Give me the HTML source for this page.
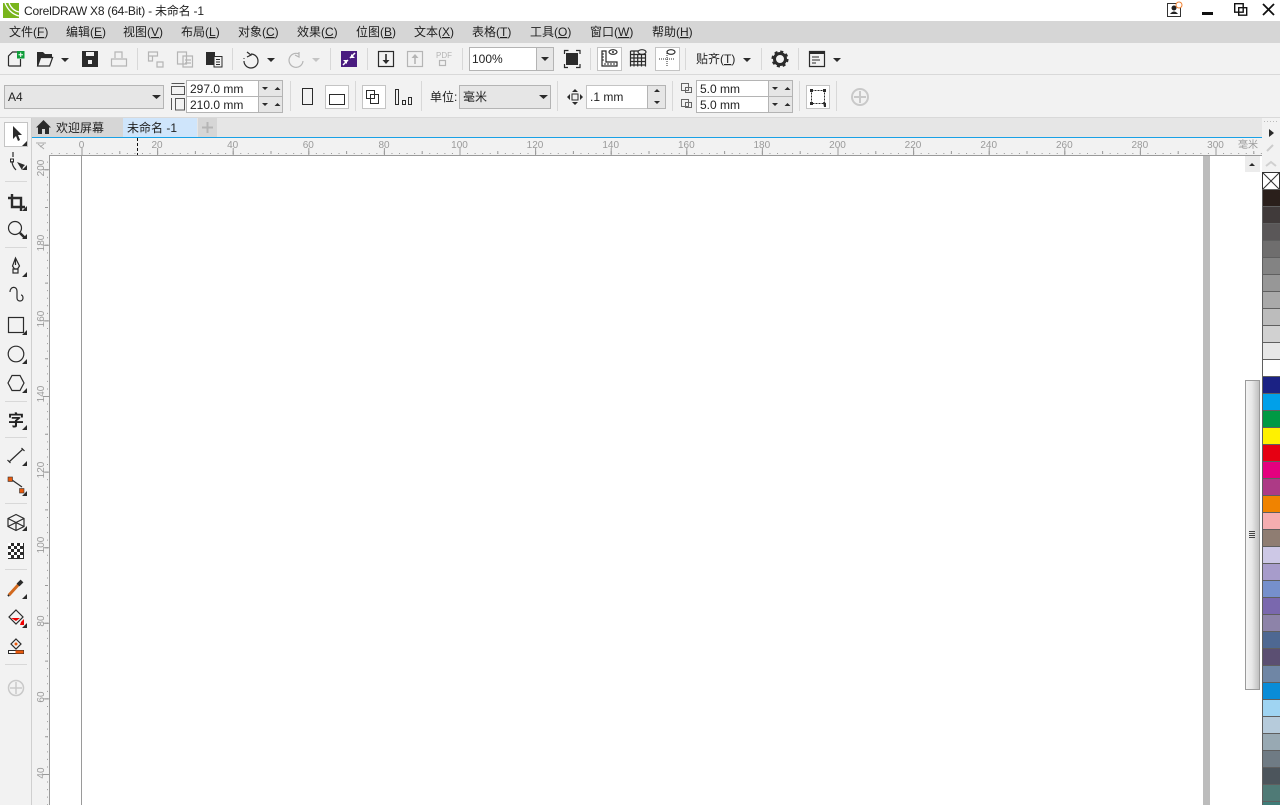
<!DOCTYPE html>
<html lang="zh"><head><meta charset="utf-8"><title>CorelDRAW X8</title>
<style>html,body{margin:0;padding:0;width:1280px;height:805px;overflow:hidden;background:#fff}svg{display:block}
text{font-family:"Liberation Sans","Noto Sans CJK SC",sans-serif;font-size:12px;fill:#222}
.m text{font-size:12px}.r text{font-size:10px;fill:#9a9a9a;text-anchor:middle}
.ic{fill:none;stroke:#2b2b2b;stroke-width:1.2}.g{fill:none;stroke:#b5b5b5;stroke-width:1.2}.d{fill:#2b2b2b}
.sep{stroke:#d8d8d8;stroke-width:1}.box{fill:#fff;stroke:#b4b4b4}.sp{fill:#e6e6e6;stroke:#b4b4b4}.btn{fill:#fff;stroke:#c4c4c4}
</style></head><body>
<svg width="1280" height="805" viewBox="0 0 1280 805" xmlns="http://www.w3.org/2000/svg">
<rect width="1280" height="805" fill="#fff"/>
<!-- title -->
<rect x="3" y="3" width="16" height="15" fill="#79b51c"/><path d="M5 3C8 10 12 14 19 16M9 3C11 8 14 11 19 12" stroke="#fff" stroke-width="1.3" fill="none"/>
<text x="24" y="15" textLength="180" lengthAdjust="spacing">CorelDRAW X8 (64-Bit) - 未命名 -1</text>
<rect x="1167.500" y="3.500" width="13" height="13" fill="none" stroke="#333"/><circle cx="1174" cy="8" r="2.500" fill="#222"/><path d="M1170 14q4-5 8 0z" fill="#222"/><circle cx="1179" cy="5" r="3" fill="#fff" stroke="#f08030"/>
<rect x="1202" y="12" width="11" height="3" fill="#111"/>
<path d="M1234.700 3.700h8.500v8.500h-8.500zM1238.700 7.700h8v7.500h-8z" fill="#fff" stroke="#111" stroke-width="1.400"/>
<path d="M1263 4l11 11M1274 4l-11 11" stroke="#111" stroke-width="1.800"/>
<!-- menu -->
<rect y="21" width="1280" height="22" fill="#d6d6d6"/>
<g class="m">
<text x="9" y="36">文件(<tspan text-decoration="underline">F</tspan>)</text>
<text x="66" y="36">编辑(<tspan text-decoration="underline">E</tspan>)</text>
<text x="123" y="36">视图(<tspan text-decoration="underline">V</tspan>)</text>
<text x="181" y="36">布局(<tspan text-decoration="underline">L</tspan>)</text>
<text x="238" y="36">对象(<tspan text-decoration="underline">C</tspan>)</text>
<text x="297" y="36">效果(<tspan text-decoration="underline">C</tspan>)</text>
<text x="356" y="36">位图(<tspan text-decoration="underline">B</tspan>)</text>
<text x="414" y="36">文本(<tspan text-decoration="underline">X</tspan>)</text>
<text x="472" y="36">表格(<tspan text-decoration="underline">T</tspan>)</text>
<text x="530" y="36">工具(<tspan text-decoration="underline">O</tspan>)</text>
<text x="590" y="36">窗口(<tspan text-decoration="underline">W</tspan>)</text>
<text x="652" y="36">帮助(<tspan text-decoration="underline">H</tspan>)</text>
</g>
<!-- bars -->
<rect y="43" width="1280" height="75" fill="#f2f2f2"/>
<path d="M0 74.500H1280M0 117.500H1280" stroke="#d9d9d9"/>
<path class="sep" d="M137.500 48v22M232.500 48v22M330.500 48v22M367.500 48v22M462.500 48v22M590.500 48v22M685.500 48v22M761.500 48v22M798.500 48v22M290.500 81v30M355.500 81v30M421.500 81v30M557.500 81v30M672.500 81v30M799.500 81v30M836.500 81v30"/>
<!-- toolbar icons -->
<path class="ic" d="M8.500 66v-10l4-4h5M8.500 66h12v-7"/><rect x="17" y="51" width="7.500" height="7.500" fill="#0f9d3a"/><path d="M20.700 52.500v4.500M18.500 54.700h4.500" stroke="#fff"/>
<path d="M37 66V52h6l2 2h7v3h-10l-3 9z" class="d"/><path d="M37.600 66l3-8.500h12l-3 8.500z" fill="#f2f2f2" stroke="#2b2b2b" stroke-width="1.200"/>
<path class="d" d="M61 58h8l-4 4z"/>
<path class="d" d="M82 51h16v16H82z"/><rect x="86" y="52" width="8" height="4" fill="#f2f2f2"/><rect x="88" y="60" width="4" height="4" fill="#f2f2f2"/>
<path class="g" d="M115 58v-6h7v6M111.500 66v-7h15v7z"/>
<path class="g" d="M148.500 52h9v4h-5v5h-4zM148.500 56h4M157 62h6v5h-6z"/>
<path class="g" d="M177.500 52h9v12h-9zM183 56h9.500v11H183z"/><path class="g" d="M185 60h6M185 63h6"/>
<path class="d" d="M206 52h9v13h-9z"/><rect x="214" y="56.500" width="8" height="10.500" fill="#f2f2f2" stroke="#2b2b2b"/><path d="M216 59.500h4M216 62h4M216 64.500h4" stroke="#2b2b2b"/>
<path class="ic" d="M247 52l4 3-4 2"/><path class="ic" stroke-width="1.400" d="M251 54a7 7 0 1 1-7 7"/><path d="M244 58v1" stroke="#2b2b2b"/>
<path class="d" d="M267 58h8l-4 4z"/>
<path class="g" d="M299 54a7 7 0 1 0 4 7M299 52l0 5-4-2"/>
<path d="M312 58h8l-4 4z" fill="#c4c4c4"/>
<rect x="341" y="51" width="16" height="16" fill="#4a1c80"/><path d="M343 65l5-5M355 53l-5 5" stroke="#fff" stroke-width="1.500"/><path d="M351 54v4h4zM347 64v-4h-4z" fill="#fff"/>
<rect x="378.500" y="51.500" width="15" height="15" fill="none" stroke="#2b2b2b" stroke-width="1.200"/><path d="M386 54v7" stroke="#2b2b2b" stroke-width="1.600"/><path class="d" d="M382.500 60h7l-3.500 4z"/>
<rect x="407.500" y="51.500" width="15" height="15" class="g"/><path d="M415 64v-7" stroke="#b5b5b5" stroke-width="1.600"/><path fill="#b5b5b5" d="M411.500 58h7l-3.500-4z"/>
<text x="436" y="58" style="font-size:8px;fill:#b5b5b5">PDF</text><rect x="439.500" y="60.500" width="6" height="5" class="g" stroke-width="1"/>
<!-- zoom combo -->
<rect x="469.500" y="47.500" width="84" height="23" class="box"/><rect x="536.500" y="47.500" width="17" height="23" class="sp"/>
<text x="472" y="63">100%</text><path class="d" d="M541 57h8l-4 4z"/>
<path d="M564.500 54v-3.500h4M576 50.500h4v3.500M580 64v3.500h-4M568 67.500h-3.500V64" fill="none" stroke="#2b2b2b" stroke-width="1.200"/><rect x="566" y="53" width="12" height="12" class="d"/>
<rect x="597.500" y="47.500" width="24" height="23" class="btn"/><path class="ic" d="M602 51v15h15v-4h-11V51z"/><path d="M605 65v-2M608 65v-2M611 65v-2M614 65v-2M602 54h2M602 57h2M602 60h2" stroke="#2b2b2b"/><ellipse cx="613" cy="52" rx="4" ry="2.300" class="ic" stroke-width="1"/><circle cx="613" cy="52" r="1" class="d"/>
<path class="ic" d="M630.500 54.500h15.500M630.500 58h15.500M630.500 61.500h15.500M630.500 65h15.500M630.500 51v15.500M634 51v15.500M637.700 54v12.500M641.500 54v12.500M645.500 54v12.500M630.500 51h8" stroke-width="1"/><ellipse cx="642" cy="52" rx="4" ry="2.300" class="ic" stroke-width="1" fill="#f2f2f2"/>
<rect x="655.500" y="47.500" width="24" height="23" class="btn"/><path d="M667 51v16M659 59h15" stroke="#2b2b2b" stroke-dasharray="1 1"/><ellipse cx="671" cy="52" rx="4" ry="2.300" class="ic" stroke-width="1"/>
<text x="696" y="63">贴齐(<tspan text-decoration="underline">T</tspan>)</text><path class="d" d="M743 58h8l-4 4z"/>
<circle cx="780" cy="59" r="5.500" fill="none" stroke="#2b2b2b" stroke-width="3"/><circle cx="780" cy="59" r="7.300" fill="none" stroke="#2b2b2b" stroke-width="2.500" stroke-dasharray="3 2.730"/>
<path class="ic" d="M809.500 51.500h15v15h-15z"/><path d="M809 51h16v3h-16z" class="d"/><path d="M812 57h7M812 60h8M812 63h4" stroke="#2b2b2b"/>
<path class="d" d="M833 58h8l-4 4z"/>
<!-- prop bar -->
<rect x="4.500" y="85.500" width="159" height="23" class="sp"/><text x="8" y="101">A4</text><path class="d" d="M152 95h9l-4.500 4z"/>
<path d="M171.500 83.500h13M171.500 86.500h13v8h-13z" fill="none" stroke="#555"/><path d="M171.500 98v12M175.500 98.500h9v11.500h-9z" fill="none" stroke="#555"/>
<rect x="186.500" y="80.500" width="72" height="16" class="box"/><rect x="186.500" y="96.500" width="72" height="16" class="box"/>
<rect x="258.500" y="80.500" width="24" height="16" class="sp"/><rect x="258.500" y="96.500" width="24" height="16" class="sp"/>
<text x="190" y="93">297.0 mm</text><text x="190" y="109">210.0 mm</text>
<path class="d" d="M262 87h6l-3 3zM274.500 90h6l-3-3zM262 103h6l-3 3zM274.500 106h6l-3-3z"/>
<rect x="302.500" y="88.500" width="10" height="16" fill="none" stroke="#2b2b2b"/>
<rect x="325.500" y="85.500" width="23" height="23" class="btn"/><rect x="329.500" y="94.500" width="15" height="10" fill="none" stroke="#2b2b2b"/>
<rect x="362.500" y="85.500" width="23" height="23" class="btn"/><path d="M366.500 90.500h8v8h-8zM370.500 94.500h8v9h-8z" fill="none" stroke="#2b2b2b"/>
<path d="M395.500 89.500h3v15h-3zM402.500 100.500h3v4h-3zM408.500 97.500h3v7h-3z" fill="none" stroke="#2b2b2b"/>
<text x="430" y="101">单位:</text>
<rect x="459.500" y="85.500" width="91" height="23" class="sp"/><text x="463" y="101">毫米</text><path class="d" d="M539 95h9l-4.500 4z"/>
<path class="d" d="M575 89l3 3h-6zM575 105l3-3h-6zM567 97l3-3v6zM583 97l-3-3v6z"/><rect x="572" y="94" width="6" height="6" fill="none" stroke="#2b2b2b"/>
<rect x="586.500" y="85.500" width="62" height="23" fill="#fff" stroke="#c4c4c4"/><rect x="647.500" y="85.500" width="18" height="23" class="sp"/>
<text x="590" y="101">.1 mm</text><path class="d" d="M654 92h6l-3-3zM654 101h6l-3 3z"/>
<path d="M681.500 83.500h7v7h-7zM685.500 87.500h6v5h-6z" fill="none" stroke="#666"/><path d="M681.500 99.500h7v7h-7zM685.500 102.500h6v5h-6z" fill="none" stroke="#666"/>
<rect x="696.500" y="80.500" width="72" height="16" class="box"/><rect x="696.500" y="96.500" width="72" height="16" class="box"/>
<rect x="768.500" y="80.500" width="24" height="16" class="sp"/><rect x="768.500" y="96.500" width="24" height="16" class="sp"/>
<text x="700" y="93">5.0 mm</text><text x="700" y="109">5.0 mm</text>
<path class="d" d="M772 87h6l-3 3zM784.500 90h6l-3-3zM772 103h6l-3 3zM784.500 106h6l-3-3z"/>
<rect x="806.500" y="85.500" width="23" height="23" class="btn"/><rect x="811.500" y="90.500" width="13" height="13" fill="none" stroke="#2b2b2b" stroke-dasharray="2 1"/><path class="d" d="M810 89h3v3h-3zM823 89h3v3h-3zM810 102h3v3h-3zM823 102l3 1v4h-2z"/>
<circle cx="860" cy="97" r="8" fill="none" stroke="#c9c9c9" stroke-width="2"/><path d="M860 91v12M854 97h12" stroke="#c9c9c9" stroke-width="2"/>
<!-- tabs -->
<rect x="32" y="118" width="1230" height="19" fill="#e6e6e6"/>
<rect x="32" y="118" width="91" height="19" fill="#d6d6d6"/>
<rect x="123" y="118" width="74" height="19" fill="#cfe5fb"/>
<rect x="198" y="118" width="19" height="19" fill="#d6d6d6"/>
<path d="M207.500 122v11M202 127.500h11" stroke="#b5b5b5" stroke-width="2"/>
<path class="d" d="M43.500 120L36 127.500h2V134h4v-5h3v5h4v-6.500h2z"/>
<text x="56" y="132">欢迎屏幕</text><text x="127" y="132">未命名 -1</text>
<rect x="32" y="137" width="1230" height="1" fill="#19a1e6"/>
<!-- rulers -->
<rect x="32" y="138" width="1230" height="17" fill="#f2f2f2"/>
<rect x="32" y="138" width="17" height="667" fill="#f2f2f2"/>
<path d="M49.500 155V805M49 155.500H1262" stroke="#9a9a9a"/>
<path d="M51.260 153.500H1262" stroke="#9a9a9a" stroke-dasharray="1 6.560"/>
<path d="M81.500 152.500H1262" stroke="#9a9a9a" stroke-width="3" stroke-dasharray="1 36.800"/>
<path d="M81.500 151.500H1262" stroke="#9a9a9a" stroke-width="7" stroke-dasharray="1 74.600"/>
<path d="M47.500 161.640V805" stroke="#9a9a9a" stroke-dasharray="1 6.560"/>
<path d="M46.500 169.200V805" stroke="#9a9a9a" stroke-width="3" stroke-dasharray="1 36.800"/>
<path d="M46 169.200V805" stroke="#9a9a9a" stroke-width="6" stroke-dasharray="1 74.600"/>
<path d="M137.500 138v17" stroke="#111" stroke-dasharray="3 2"/>
<path d="M36 143h10M38 144l6 5M44 144l-4 3" stroke="#aaa" fill="none"/>
<g class="r">
<text x="81.500" y="148">0</text><text x="157" y="148">20</text><text x="232.700" y="148">40</text><text x="308.300" y="148">60</text><text x="384" y="148">80</text><text x="459.500" y="148">100</text><text x="535" y="148">120</text><text x="610.700" y="148">140</text><text x="686.300" y="148">160</text><text x="761.800" y="148">180</text><text x="837.500" y="148">200</text><text x="913" y="148">220</text><text x="988.700" y="148">240</text><text x="1064.300" y="148">260</text><text x="1139.800" y="148">280</text><text x="1215.500" y="148">300</text>
<text x="1248" y="148">毫米</text>
<text transform="rotate(-90 44 168)" x="44" y="168">200</text><text transform="rotate(-90 44 243)" x="44" y="243">180</text><text transform="rotate(-90 44 319)" x="44" y="319">160</text><text transform="rotate(-90 44 394)" x="44" y="394">140</text><text transform="rotate(-90 44 470)" x="44" y="470">120</text><text transform="rotate(-90 44 545)" x="44" y="545">100</text><text transform="rotate(-90 44 621)" x="44" y="621">80</text><text transform="rotate(-90 44 697)" x="44" y="697">60</text><text transform="rotate(-90 44 773)" x="44" y="773">40</text>
</g>
<!-- page -->
<rect x="81" y="155" width="1" height="650" fill="#9a9a9a"/>
<rect x="1203" y="156" width="7" height="649" fill="#bcbcbc"/>
<rect x="1245" y="156" width="15" height="16" fill="#ececec"/><path class="d" d="M1249 166h6l-3-3z"/>
<defs><linearGradient id="sb" x1="0" x2="1" y1="0" y2="0"><stop offset="0" stop-color="#f4f4f4"/><stop offset=".45" stop-color="#e8e8e8"/><stop offset="1" stop-color="#bdbdbd"/></linearGradient></defs>
<rect x="1245.500" y="380.500" width="14" height="309" fill="url(#sb)" stroke="#9a9a9a"/>
<path d="M1249 531.500h6M1249 533.500h6M1249 535.500h6M1249 537.500h6" stroke="#444"/>
<!-- left toolbar -->
<rect x="0" y="118" width="31" height="687" fill="#f2f2f2"/><rect x="31" y="118" width="1" height="687" fill="#cfcfcf"/>
<rect x="4.500" y="122.500" width="23" height="24" fill="#fff" stroke="#c4c4c4"/>
<path class="sep" d="M5 181.500h22M5 247.500h22M5 401.500h22M5 437.500h22M5 503.500h22M5 569.500h22M5 664.500h22"/>
<path class="d" d="M13 126v13l3-3 2 5 2-1-2-5h4z"/>
<path class="ic" d="M13 152v5M12 161c0 4 2 7 4 9"/><rect x="10.500" y="159" width="3" height="3" fill="none" stroke="#2b2b2b"/><path class="d" d="M17 162l8 3-2 2-1 3z"/>
<path d="M12 194v13h13M8 198h13v13" fill="none" stroke="#2b2b2b" stroke-width="2.400"/>
<circle cx="15" cy="228" r="6.500" class="ic"/><path d="M20 233l5 5" stroke="#2b2b2b" stroke-width="2.500"/>
<path class="ic" d="M15.500 258l-3 8 2 3h3l2-3zM15.500 258v7"/><rect x="13" y="269" width="5" height="4" class="ic"/>
<path class="ic" stroke-width="1.500" d="M10 292c0-6 7-6 7-1v7c0 4 6 4 6 0 0-2-1-3-2-3"/>
<rect x="8.500" y="317.500" width="15" height="15" class="ic"/>
<circle cx="16" cy="354" r="7.800" class="ic"/>
<path class="ic" d="M12 375.500h8l4 7.500-4 7.500h-8l-4-7.500z"/>
<text x="8" y="426" style="font-size:16px;font-weight:bold">字</text>
<path class="ic" d="M9 462l14-13M7.500 460l3 3M21.500 448l3 3"/>
<path d="M12 480l10 7" stroke="#2b2b2b" stroke-width="1.200"/><rect x="8" y="477" width="4.500" height="4.500" fill="#e8590c" stroke="#333" stroke-width=".6"/><rect x="19.500" y="488.500" width="4.500" height="4.500" fill="#e8590c" stroke="#333" stroke-width=".6"/>
<path class="ic" d="M16 514.500l8 4v8l-8 4-8-4v-8zM8 518.500l8 4 8-4M16 522.500v8M8 526.500l8-4 8 4"/>
<rect x="8" y="543" width="16" height="16" class="d"/><path d="M8 543h3v3H8zM14 543h3v3h-3zM20 543h3v3h-3zM11 546h3v3h-3zM17 546h3v3h-3zM8 549h3v3H8zM14 549h3v3h-3zM20 549h3v3h-3zM11 552h3v3h-3zM17 552h3v3h-3zM8 555h3v3H8zM14 555h3v3h-3zM20 555h3v3h-3z" fill="#fff"/>
<path d="M9 595l10-11" stroke="#d2691e" stroke-width="3"/><path d="M18 585l4-4" stroke="#2b2b2b" stroke-width="4"/><path d="M9 595l-1 1" stroke="#222" stroke-width="2"/>
<path class="ic" stroke-width="1.500" d="M16 610l7 7-7 7-7-7z"/><path d="M11 618h9l-4 3z" fill="#e00"/><path d="M21 622l3-3v6h-4z" fill="#e00"/>
<path class="ic" d="M16 639l5 5-5 5-5-5z"/><circle cx="16" cy="644" r="1.500" fill="#e8590c"/><rect x="8.500" y="650.500" width="15" height="3" fill="#fff" stroke="#2b2b2b"/><rect x="15.500" y="650.500" width="8" height="3" fill="#e8590c"/>
<circle cx="16" cy="688" r="7.500" fill="none" stroke="#c9c9c9" stroke-width="1.500"/><path d="M16 682v12M10 688h12" stroke="#c9c9c9" stroke-width="1.500"/>
<path class="d" d="M27 141v5h-5zM27 165v5h-5zM27 206v5h-5zM27 234v5h-5zM27 272v5h-5zM27 330v5h-5zM27 359v5h-5zM27 388v5h-5zM27 425v5h-5zM27 461v5h-5zM27 491v5h-5zM27 526v5h-5zM27 594v5h-5zM27 623v5h-5z"/>
<!-- palette -->
<rect x="1262" y="118" width="18" height="54" fill="#f2f2f2"/>
<path d="M1264 121.500h15" stroke="#bbb" stroke-dasharray="1 2"/>
<path class="d" d="M1269 129l5 4-5 4z"/>
<path d="M1267 151l6-6" stroke="#ccc" stroke-width="2"/>
<path d="M1266 166l5-4 5 4" stroke="#d0d0d0" stroke-width="2" fill="none"/>
<rect x="1262.500" y="172.500" width="17" height="17" fill="#fff" stroke="#333"/><path d="M1263 173l16 16M1279 173l-16 16" stroke="#333"/>
<g stroke="#5f5f5f" stroke-width="1">
<rect x="1262.500" y="189.500" width="18" height="17" fill="#2a1f1b"/>
<rect x="1262.500" y="206.500" width="18" height="17" fill="#403a3a"/>
<rect x="1262.500" y="223.500" width="18" height="17" fill="#5a5758"/>
<rect x="1262.500" y="240.500" width="18" height="17" fill="#6f6e6e"/>
<rect x="1262.500" y="257.500" width="18" height="17" fill="#838383"/>
<rect x="1262.500" y="274.500" width="18" height="17" fill="#979797"/>
<rect x="1262.500" y="291.500" width="18" height="17" fill="#a9a9a9"/>
<rect x="1262.500" y="308.500" width="18" height="17" fill="#bcbcbc"/>
<rect x="1262.500" y="325.500" width="18" height="17" fill="#d1d1d1"/>
<rect x="1262.500" y="342.500" width="18" height="17" fill="#e7e7e7"/>
<rect x="1262.500" y="359.500" width="18" height="17" fill="#fff"/>
<rect x="1262.500" y="376.500" width="18" height="17" fill="#1b2284"/>
<rect x="1262.500" y="393.500" width="18" height="17" fill="#00a0e9"/>
<rect x="1262.500" y="410.500" width="18" height="17" fill="#009944"/>
<rect x="1262.500" y="427.500" width="18" height="17" fill="#fff100"/>
<rect x="1262.500" y="444.500" width="18" height="17" fill="#e60012"/>
<rect x="1262.500" y="461.500" width="18" height="17" fill="#e4007f"/>
<rect x="1262.500" y="478.500" width="18" height="17" fill="#ad3a86"/>
<rect x="1262.500" y="495.500" width="18" height="17" fill="#f08300"/>
<rect x="1262.500" y="512.500" width="18" height="17" fill="#f5adb0"/>
<rect x="1262.500" y="529.500" width="18" height="17" fill="#8f7d72"/>
<rect x="1262.500" y="546.500" width="18" height="17" fill="#cdc8e6"/>
<rect x="1262.500" y="563.500" width="18" height="17" fill="#a79ccb"/>
<rect x="1262.500" y="580.500" width="18" height="17" fill="#7690cc"/>
<rect x="1262.500" y="597.500" width="18" height="17" fill="#7a68ae"/>
<rect x="1262.500" y="614.500" width="18" height="17" fill="#8d83a9"/>
<rect x="1262.500" y="631.500" width="18" height="17" fill="#4e6892"/>
<rect x="1262.500" y="648.500" width="18" height="17" fill="#5b4f72"/>
<rect x="1262.500" y="665.500" width="18" height="17" fill="#6f86a5"/>
<rect x="1262.500" y="682.500" width="18" height="17" fill="#0a8cd7"/>
<rect x="1262.500" y="699.500" width="18" height="17" fill="#9fd4f2"/>
<rect x="1262.500" y="716.500" width="18" height="17" fill="#b6cbdb"/>
<rect x="1262.500" y="733.500" width="18" height="17" fill="#98a9b3"/>
<rect x="1262.500" y="750.500" width="18" height="17" fill="#6f7b84"/>
<rect x="1262.500" y="767.500" width="18" height="17" fill="#4c555c"/>
<rect x="1262.500" y="784.500" width="18" height="17" fill="#4f7a76"/>
<rect x="1262.500" y="801.500" width="18" height="17" fill="#3f7c78"/>
</g>
</svg>
</body></html>
